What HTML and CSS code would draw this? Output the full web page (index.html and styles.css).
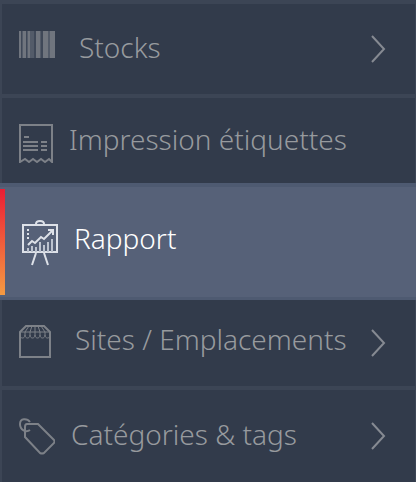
FILE: index.html
```
<!DOCTYPE html>
<html lang="fr">
<head>
    <meta charset="UTF-8">
    <meta name="viewport" content="width=device-width, initial-scale=1.0">
    <title>Menu</title>
    <link rel="stylesheet" href="styles.css">
</head>
<body>
    <nav class="menu">
        <a class="item wide" href="#stocks">
            <svg class="icon barcode" width="36" height="27" viewBox="0 0 36 27">
                <path fill="#535b69" d="M0 0h36v27H0z"/>
                <path fill="#70757e" d="M0 0h2v27H0zM4 0h3v27H4zM9 0h2v27H9zM17 0h4v27h-4zM24 0h5v27h-5zM31 0h5v27h-5z"/>
                <path fill="#3f4858" d="M2 0h1v27H2zM7 0h1v27H7zM15 0h2v27h-2zM22 0h2v27h-2z"/>
            </svg>
            <span class="label">Stocks</span>
            <svg class="arrow" width="15" height="28" viewBox="0 0 15 28"><path d="M1 1l12 13L1 27"/></svg>
        </a>
        <a class="item short" href="#etiquettes">
            <svg class="icon receipt" width="34" height="39" viewBox="0 0 34 39">
                <path d="M1 38V1h32v37l-3-3-4 3-4-3-4 3-4-3-4 3-4-3z"/>
                <path d="M5 13h5M4 18h15M4 22h15M4 26h15M22 18h6M22 22h6M22 26h6"/>
            </svg>
            <span class="label">Impression étiquettes</span>
        </a>
        <a class="item active" href="#rapport" aria-current="page">
            <svg class="icon board" width="36" height="47" viewBox="0 0 36 47">
                <path d="M1 5h34v27H1zM14 4c0-4 8-4 8 0M14 33l-4 12M22 33l4 12"/>
                <path d="M6 25l4-4 3 2 6-6 3 2 8-8M26 10h5v5"/>
                <path class="bars" d="M6 32v-4M10 32v-6M14 32v-5M18 32V22M22 32v-7M26 32V22M30 32V19"/>
                <path class="dots" d="M6 9v12"/>
            </svg>
            <span class="label">Rapport</span>
        </a>
        <a class="item short wide raised" href="#sites">
            <svg class="icon store" width="32" height="33" viewBox="0 0 32 33">
                <path d="M1 7v25h30V7L25 1H7z"/>
                <path class="awning" d="M1 7h30M1 7v3c0 4 5 4 5 0 0 4 5 4 5 0 0 4 5 4 5 0 0 4 5 4 5 0 0 4 5 4 5 0 0 4 5 4 5 0V7M6 10V7l4-6M11 10V7l2-6M16 10V1M21 10V7l-2-6M26 10V7l-4-6"/>
            </svg>
            <span class="label">Sites / Emplacements</span>
            <svg class="arrow" width="15" height="28" viewBox="0 0 15 28"><path d="M1 1l12 13L1 27"/></svg>
        </a>
        <a class="item" href="#categories">
            <svg class="icon tag" width="36" height="37" viewBox="0 0 36 37">
                <path d="M8 6h11l16 16q1 1 0 3L25 35q-2 1-4 0L6 19V9q0-3 2-3z"/>
                <path d="M11 4C8 0 1 0 1 6s6 9 10 6"/>
            </svg>
            <span class="label">Catégories &amp; tags</span>
            <svg class="arrow" width="15" height="28" viewBox="0 0 15 28"><path d="M1 1l12 13L1 27"/></svg>
        </a>
    </nav>
</body>
</html>
```

FILE: styles.css
```
body {
    margin: 0;
    background-color: #323b4b;
    font-family: "Noto Sans", "Open Sans", sans-serif;
}
.menu {
    border-top: 4px solid #3c4555;
}
.item {
    display: flex;
    align-items: center;
    gap: 16px;
    box-sizing: border-box;
    min-height: 94px;
    padding: 0 29px 0 17px;
    border: solid #3c4555;
    border-width: 0 1px 4px 2px;
    color: #979a9e;
    font-size: 28px;
    font-weight: 300;
    line-height: 36px;
    text-decoration: none;
    white-space: nowrap;
}
.item:last-child {
    border-bottom-width: 2px;
}
.wide {
    gap: 24px;
}
.short {
    min-height: 90px;
}
.icon, .arrow {
    flex: none;
    fill: none;
    stroke: #7d8188;
    stroke-width: 2;
}
.label {
    flex: 1;
    min-width: 0;
    padding-bottom: 4px;
}
.raised .label {
    padding-bottom: 8px;
}
.barcode {
    stroke: none;
    margin-bottom: 9px;
}
.receipt {
    margin-top: 4px;
}
.store {
    margin-bottom: 4px;
}
.store .awning {
    stroke-width: 1;
}
.arrow {
    stroke: #868a92;
}
.active {
    position: relative;
    min-height: 117px;
    margin-top: -5px;
    padding-left: 22px;
    border: solid #4e5a71;
    border-width: 4px 0 3px;
    background-color: #566178;
    color: #fff;
}
/* red to orange marker on the current entry */
.active::before {
    content: "";
    position: absolute;
    top: 2px;
    bottom: 2px;
    left: 0;
    width: 5px;
    background: linear-gradient(#e91e35, #f49a42);
}
.active .icon {
    margin-top: 3px;
    stroke: #dde1e8;
}
.active .label {
    padding-bottom: 8px;
}
.active .bars {
    stroke: #bcc3cf;
}
.active .dots {
    stroke-dasharray: 2 2;
}
```
